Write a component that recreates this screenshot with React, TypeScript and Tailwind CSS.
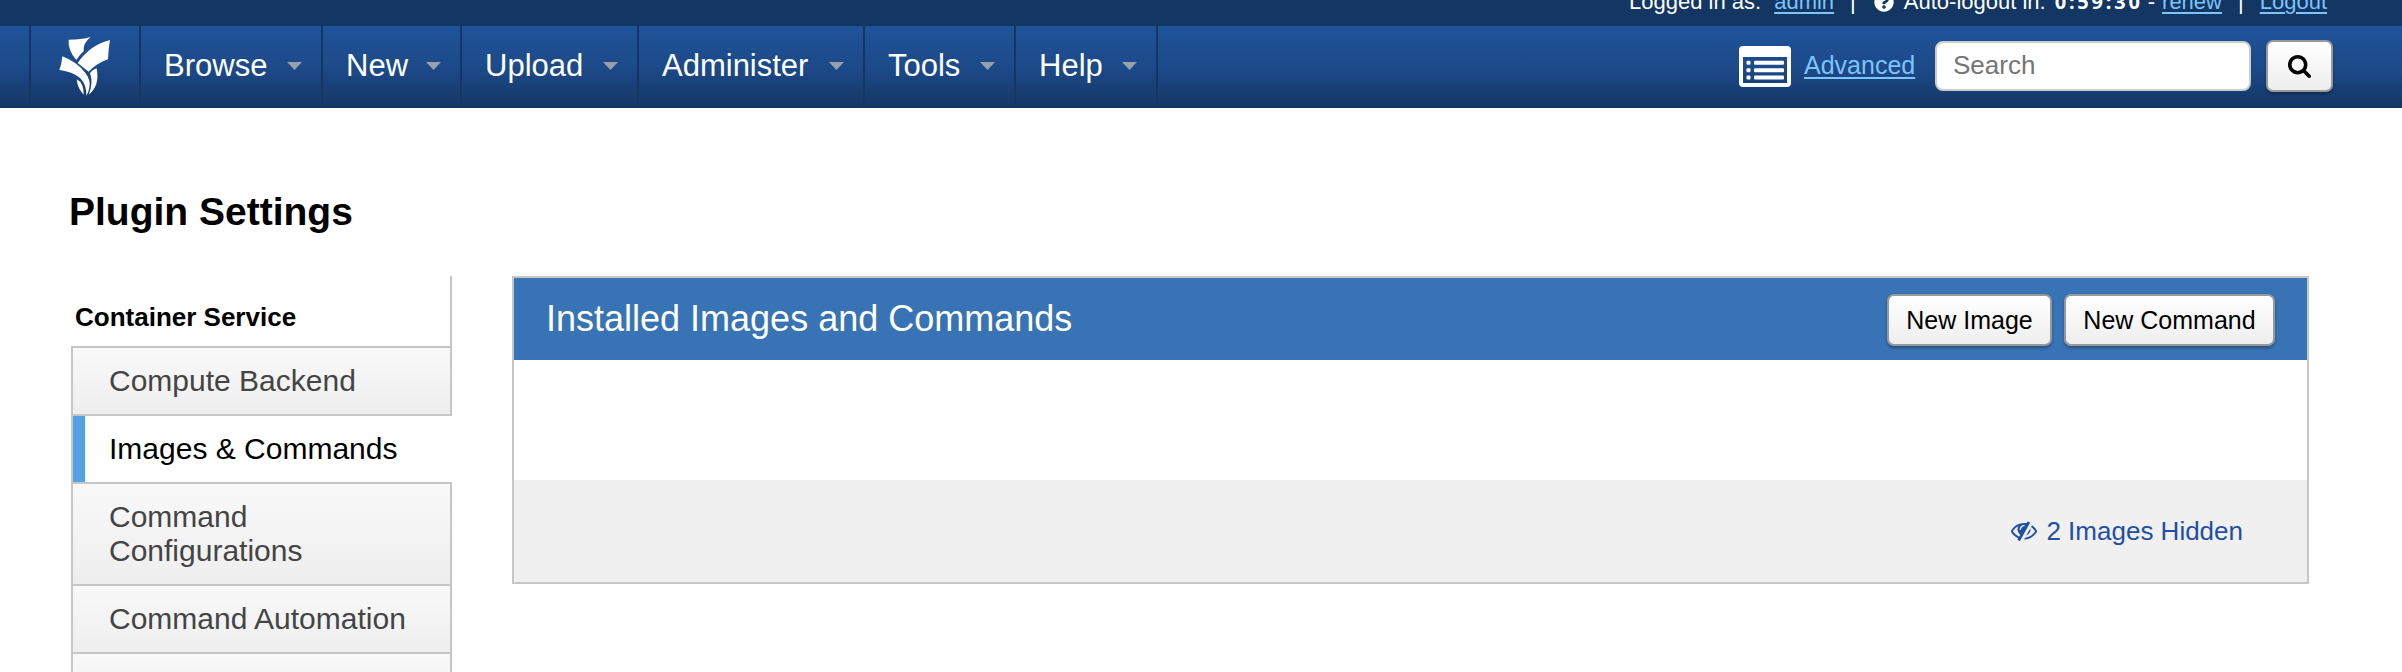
import React from "react";
import { FaQuestionCircle } from "react-icons/fa";

const navItems = [
  { label: "Browse", width: "w-[182px]" },
  { label: "New", width: "w-[139px]" },
  { label: "Upload", width: "w-[177px]" },
  { label: "Administer", width: "w-[226px]" },
  { label: "Tools", width: "w-[151px]" },
  { label: "Help", width: "w-[142px]" },
];

const buttonClass =
  "flex h-[52px] items-center justify-center rounded-[7px] border-2 border-[#999] bg-linear-to-b from-white to-[#eee] text-[25px] leading-[30px] text-black shadow-[0_2px_3px_rgba(0,0,0,0.3)]";

function Logo() {
  return (
    <svg viewBox="178 106 156 180" className="h-[60px] w-[52px]" fill="#fff">
      <path d="M207 117Q245 117 273 109Q249 128 252 152Q240 162 230 178Q204 148 207 117Z" />
      <path d="M331 118Q326 145 325 176Q292 187 267 213L234 187Q272 132 331 118Z" />
      <path d="M188 167Q233 184 258 218Q274 240 269 262Q266 277 260 285Q260 262 252 246Q235 216 179 208Q186 190 188 167Z" />
      <path d="M291 203Q301 256 267 282Q282 246 271 217Q279 207 291 203Z" />
      <path d="M231 236Q253 247 252 282Q234 264 231 236Z" />
    </svg>
  );
}

function ListIcon() {
  return (
    <svg viewBox="0 0 52 41" className="h-[41px] w-[52px]">
      <path
        fill="#fff"
        fillRule="evenodd"
        d="M4 0H48Q52 0 52 4V37Q52 41 48 41H4Q0 41 0 37V4Q0 0 4 0ZM4 11V37H48V11Z"
      />
      <g fill="#fff">
        <rect x="7.5" y="14.8" width="4" height="4" rx="1" />
        <rect x="15" y="14.8" width="30" height="4" rx="1" />
        <rect x="7.5" y="22.2" width="4" height="4" rx="1" />
        <rect x="15" y="22.2" width="30" height="4" rx="1" />
        <rect x="7.5" y="29.6" width="4" height="4" rx="1" />
        <rect x="15" y="29.6" width="30" height="4" rx="1" />
      </g>
    </svg>
  );
}

function SearchIcon() {
  return (
    <svg viewBox="0 -1408 1664 1664" className="size-[23px]">
      <path
        transform="scale(1,-1)"
        d="M1152 704q0 185 -131.5 316.5t-316.5 131.5t-316.5 -131.5t-131.5 -316.5t131.5 -316.5t316.5 -131.5t316.5 131.5t131.5 316.5zM1664 -128q0 -52 -38 -90t-90 -38q-54 0 -90 38l-343 342q-179 -124 -399 -124q-143 0 -273.5 55.5t-225 150t-150 225t-55.5 273.5t55.5 273.5t150 225t225 150t273.5 55.5t273.5 -55.5t225 -150t150 -225t55.5 -273.5q0 -220 -124 -399l343 -343q37 -37 37 -90z"
      />
    </svg>
  );
}

function EyeSlashIcon() {
  return (
    <svg viewBox="0 -1280 1792 1376" className="h-5 w-[26px]" fill="currentColor">
      <path
        transform="scale(1,-1)"
        d="M555 201l78 141q-87 63 -136 159t-49 203q0 121 61 225q-229 -117 -381 -353q167 -258 427 -375zM944 960q0 20 -14 34t-34 14q-125 0 -214.5 -89.5t-89.5 -214.5q0 -20 14 -34t34 -14t34 14t14 34q0 86 61 147t147 61q20 0 34 14t14 34zM1307 1151q0 -7 -1 -9q-106 -189 -316 -567t-315 -566l-49 -89q-10 -16 -28 -16q-12 0 -134 70q-16 10 -16 28q0 12 44 87q-143 65 -263.5 173t-208.5 245q-20 31 -20 69t20 69q153 235 380 371t496 136q89 0 180 -17l54 97q10 16 28 16q5 0 18 -6t31 -15.5t33 -18.5t31.5 -18.5t19.5 -11.5q16 -10 16 -27zM1344 704q0 -139 -79 -253.5t-209 -164.5l280 502q8 -45 8 -84zM1792 576q0 -35 -20 -69q-39 -64 -109 -145q-150 -172 -347.5 -267t-419.5 -95l74 132q212 18 392.5 137t301.5 307q-115 179 -282 294l63 112q95 -64 182.5 -153t144.5 -184q20 -34 20 -69z"
      />
    </svg>
  );
}

function UserBar() {
  return (
    <div className="flex h-[26px] items-start justify-end overflow-hidden bg-[#133662] pr-[75px] text-[22px] leading-[26px] whitespace-pre text-white">
      <div className="-mt-[11px] flex h-[26px] items-baseline">
        <span>Logged in as:</span>
        <a className="ml-[13px] text-[#7cc4fb] underline decoration-2 underline-offset-[3px]">admin</a>
        <span className="ml-4">|</span>
        <FaQuestionCircle className="mr-[10px] ml-[18px] size-[20px] self-center" />
        <span>Auto-logout in:</span>
        <span className="ml-[9px] font-['Noto_Sans','Open_Sans',sans-serif] text-[20px] font-bold tracking-[2.8px] tabular-nums">0:59:30</span>
        <span className="ml-[5px]">-</span>
        <a className="ml-[7px] text-[#7cc4fb] underline decoration-2 underline-offset-[3px]">renew</a>
        <span className="ml-4">|</span>
        <a className="ml-4 text-[#7cc4fb] underline decoration-2 underline-offset-[3px]">Logout</a>
      </div>
    </div>
  );
}

function NavBar() {
  return (
    <nav className="flex h-[82px] bg-[linear-gradient(to_bottom,#1f5399_0%,#1c4a89_50%,#1a447e_66%,#133662_100%)]">
      <div className="ml-[29px] flex border-l-2 border-[#133662]">
        <div className="flex w-[108px] items-start pt-[10px] pl-[28px]">
          <Logo />
        </div>
      </div>
      {navItems.map((item) => (
        <div
          key={item.label}
          className={`${item.width} flex items-center justify-between border-l-2 border-[#133662] pr-[19px] pb-0.5 pl-[23px] text-[31px] leading-[34px] text-white`}
        >
          <span>{item.label}</span>
          <svg viewBox="0 0 15 8" className="h-2 w-[15px]">
            <path d="M0 0H15L7.5 8Z" fill="#9a9fac" />
          </svg>
        </div>
      ))}
      <div className="flex flex-1 items-start border-l-2 border-[#133662]">
        <div className="ml-auto flex items-start pr-[69px]">
          <div className="pt-5">
            <ListIcon />
          </div>
          <a className="mt-6 ml-[13px] w-[111px] text-[25px] leading-[30px] text-[#7cc4fb] underline decoration-2 underline-offset-[3px]">
            Advanced
          </a>
          <input
            placeholder="Search"
            className="mt-[15px] ml-[20px] h-[50px] w-[316px] rounded-[8px] border-2 border-[#ccc] bg-white px-4 pb-0.5 text-[26px] placeholder:text-[#757575]"
          />
          <button className={`${buttonClass} mt-[14px] ml-[15px] w-[67px]`}>
            <SearchIcon />
          </button>
        </div>
      </div>
    </nav>
  );
}

const itemClass =
  "border-b-2 border-[#c6c6c6] border-r-2 bg-linear-to-b from-[#f9f9f9] to-[#eee] py-4 pr-6 pl-[36px] text-[#444]";

function Sidebar() {
  return (
    <aside className="ml-[71px] w-[381px] shrink-0">
      <h2 className="h-[70px] border-r-2 border-[#c6c6c6] pt-[26px] pl-1 text-[26px] leading-[30px] font-bold text-black">
        Container Service
      </h2>
      <ul className="border-t-2 border-l-2 border-[#c6c6c6] text-[30px] leading-[34px]">
        <li className={itemClass}>Compute Backend</li>
        <li className="border-b-2 border-[#c6c6c6]">
          <div className="border-l-12 border-[#53a3e2] bg-white py-4 pl-6 text-black">
            Images &amp; Commands
          </div>
        </li>
        <li className={itemClass}>
          Command
          <br />
          Configurations
        </li>
        <li className={itemClass}>Command Automation</li>
        <li className={`${itemClass} h-[68px]`} />
      </ul>
    </aside>
  );
}

function ImagesPanel() {
  return (
    <section className="ml-[60px] h-[308px] w-[1797px] border-2 border-[#c6c6c6]">
      <header className="flex h-[82px] items-start bg-[#3773b5] pt-4 pr-8 pl-8">
        <h3 className="mt-[5px] text-[36px] leading-10 text-white">Installed Images and Commands</h3>
        <div className="ml-auto flex gap-3">
          <button className={`${buttonClass} w-[165px]`}>New Image</button>
          <button className={`${buttonClass} w-[211px]`}>New Command</button>
        </div>
      </header>
      <div className="h-[120px] bg-white" />
      <footer className="flex h-[102px] items-center justify-end bg-[#f0f0f0] pr-16">
        <a className="flex items-center gap-[9px] text-[26px] leading-[30px] text-[#1f4fa5]">
          <EyeSlashIcon />
          2 Images Hidden
        </a>
      </footer>
    </section>
  );
}

export default function App() {
  return (
    <div className="h-[672px] w-[2402px] overflow-hidden bg-white font-['Liberation_Sans',Arial,sans-serif]">
      <UserBar />
      <NavBar />
      <main>
        <h1 className="h-[168px] pt-[82px] pl-[69px] text-[39px] leading-[44px] font-bold text-black">
          Plugin Settings
        </h1>
        <div className="flex items-start">
          <Sidebar />
          <ImagesPanel />
        </div>
      </main>
    </div>
  );
}
